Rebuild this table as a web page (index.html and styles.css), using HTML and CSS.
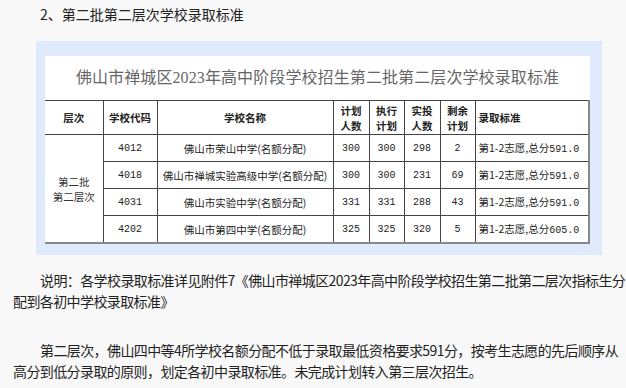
FILE: index.html
```html
<!DOCTYPE html>
<html lang="zh-CN">
<head>
    <meta charset="UTF-8">
    <title>第二批第二层次学校录取标准</title>
    <link rel="stylesheet" href="styles.css">
</head>
<body>
<div class="article">
    <p class="heading">2、第二批第二层次学校录取标准</p>
    <div class="figure">
        <div class="sheet">
            <div class="sheet-title">佛山市禅城区2023年高中阶段学校招生第二批第二层次学校录取标准</div>
            <table class="score">
                <colgroup>
                    <col style="width:58px">
                    <col style="width:54px">
                    <col style="width:176px">
                    <col style="width:36px">
                    <col style="width:35px">
                    <col style="width:36px">
                    <col style="width:35px">
                    <col>
                </colgroup>
                <tr class="head">
                    <th>层次</th>
                    <th>学校代码</th>
                    <th>学校名称</th>
                    <th>计划<br>人数</th>
                    <th>执行<br>计划</th>
                    <th>实投<br>人数</th>
                    <th>剩余<br>计划</th>
                    <th class="left">录取标准</th>
                </tr>
                <tr>
                    <td rowspan="4" class="level">第二批<br>第二层次</td>
                    <td class="num">4012</td>
                    <td>佛山市荣山中学(名额分配)</td>
                    <td class="num">300</td>
                    <td class="num">300</td>
                    <td class="num">298</td>
                    <td class="num">2</td>
                    <td class="left">第1-2志愿,总分<span class="num">591.0</span></td>
                </tr>
                <tr>
                    <td class="num">4018</td>
                    <td>佛山市禅城实验高级中学(名额分配)</td>
                    <td class="num">300</td>
                    <td class="num">300</td>
                    <td class="num">231</td>
                    <td class="num">69</td>
                    <td class="left">第1-2志愿,总分<span class="num">591.0</span></td>
                </tr>
                <tr>
                    <td class="num">4031</td>
                    <td>佛山市实验中学(名额分配)</td>
                    <td class="num">331</td>
                    <td class="num">331</td>
                    <td class="num">288</td>
                    <td class="num">43</td>
                    <td class="left">第1-2志愿,总分<span class="num">591.0</span></td>
                </tr>
                <tr>
                    <td class="num">4202</td>
                    <td>佛山市第四中学(名额分配)</td>
                    <td class="num">325</td>
                    <td class="num">325</td>
                    <td class="num">320</td>
                    <td class="num">5</td>
                    <td class="left">第1-2志愿,总分<span class="num">605.0</span></td>
                </tr>
            </table>
        </div>
    </div>
    <p class="note">说明：各学校录取标准详见附件7《佛山市禅城区2023年高中阶段学校招生第二批第二层次指标生分配到各初中学校录取标准》</p>
    <p class="text">第二层次，佛山四中等4所学校名额分配不低于录取最低资格要求591分，按考生志愿的先后顺序从高分到低分录取的原则，划定各初中录取标准。未完成计划转入第三层次招生。</p>
</div>
</body>
</html>
```

FILE: styles.css
```css
html,body{
    margin:0;
    padding:0;
    background:#f8f8f8;
}
.article{
    padding:4px 0 0 13px;
    font-family:"Microsoft YaHei","Noto Sans CJK SC",sans-serif;
    font-size:14px;
    line-height:21px;
    color:#222;
}
.article p{
    margin:0;
    text-indent:27px;
}
.article .note,.article .text{
    letter-spacing:-0.6px;
}
.figure{
    width:545px;
    margin:16px 0 0 23px;
    padding:15px 12px 11px 9px;
    background:#dfeafd;
}
.sheet{
    background:#fff;
}
.sheet-title{
    height:44px;
    line-height:44px;
    text-align:center;
    font-family:"Liberation Serif","Noto Sans CJK SC",serif;
    font-size:16px;
    letter-spacing:0.1px;
    color:#666;
}
.score{
    width:545px;
    table-layout:fixed;
    border-collapse:collapse;
    font-family:"Noto Sans CJK SC",sans-serif;
    font-size:10.5px;
    color:#222;
    border-top:1px solid #333;
    border-right:2px solid #888;
    border-bottom:2px solid #888;
}
.score th,.score td{
    border:1px solid #444;
    text-align:center;
    padding:0;
}
.score tr>*:first-child{
    border-left:none;
}
.score .head th{
    height:33px;
    font-size:10.5px;
    font-weight:bold;
    line-height:15px;
}
.score td{
    height:26px;
}
.score .left{
    text-align:left;
    padding-left:3px;
}
.score .level{
    line-height:15px;
    color:#333;
}
.num{
    font-family:"Liberation Mono",monospace;
    font-size:10px;
}
.article .note{
    margin-top:15px;
}
.article .text{
    margin-top:28px;
}
```
